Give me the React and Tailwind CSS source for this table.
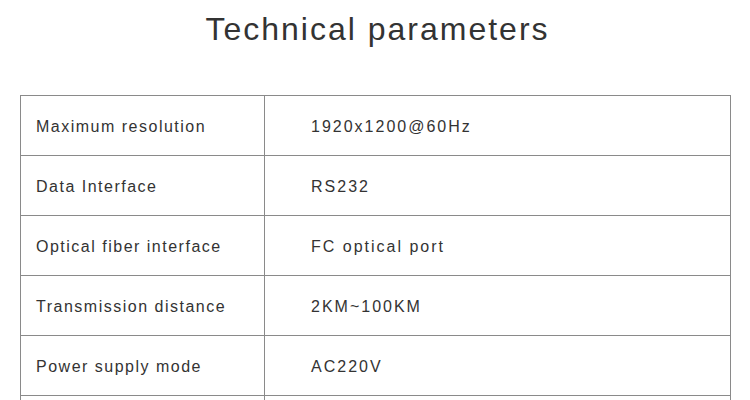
import React from "react";

const rows = [
  ["Maximum resolution", "1920x1200@60Hz"],
  ["Data Interface", "RS232"],
  ["Optical fiber interface", "FC optical port"],
  ["Transmission distance", "2KM~100KM"],
  ["Power supply mode", "AC220V"],
  ["", ""],
];

const App = () => {
  return (
    <div className="w-[750px] h-[400px] overflow-hidden bg-white font-['Liberation_Sans',Arial,sans-serif] text-[#333]">
      {/* title */}
      <div className="h-[95px] pt-[9px] pl-[5px]">
        <h1 className="text-center text-[32px] leading-[40px] tracking-[2px] font-normal">
          Technical parameters
        </h1>
      </div>

      {/* params table */}
      <div className="pl-[20px]">
        <table className="w-[711px] border-collapse">
          <tbody>
            {rows.map((r, i) => (
              <tr key={i} className="h-[60px]">
                <td className="w-[244px] border border-[#8a8a8a] pl-[15px] pt-[3px] text-[16px] tracking-[1.5px] align-middle">
                  {r[0]}
                </td>
                <td className="border border-[#8a8a8a] pl-[46px] pt-[3px] text-[16px] tracking-[2px] align-middle">
                  {r[1]}
                </td>
              </tr>
            ))}
          </tbody>
        </table>
      </div>
    </div>
  );
};

export default App;
